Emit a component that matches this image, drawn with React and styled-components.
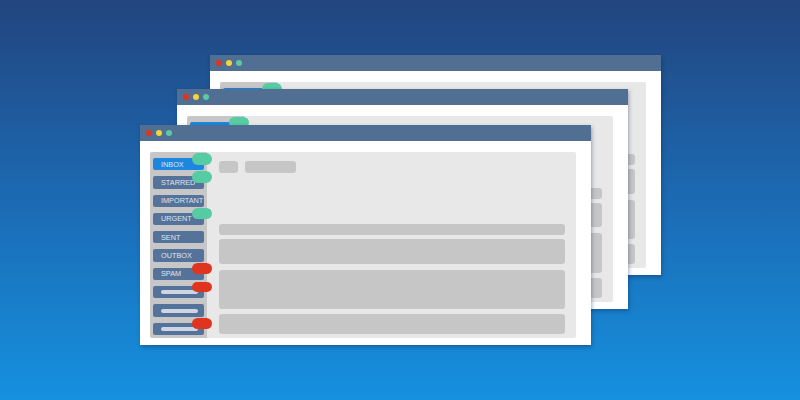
import React from 'react';
import styled, { createGlobalStyle } from 'styled-components';

const GlobalStyle = createGlobalStyle`
  html, body {
    margin: 0;
    padding: 0;
  }
  body {
    font-family: "Liberation Sans", Arial, sans-serif;
  }
`;

const Stage = styled.div`
  position: relative;
  width: 800px;
  height: 400px;
  overflow: hidden;
  background: linear-gradient(180deg, #22457e 0%, #1c6ab3 50%, #1591df 100%);
`;

// windows sit on a free canvas, so their place is part of the picture
const Frame = styled.div`
  position: absolute;
  z-index: 0;
  isolation: isolate;
  left: ${(props) => props.x}px;
  top: ${(props) => props.y}px;
  width: 451px;
  height: 220px;
  display: flex;
  flex-direction: column;
  background: #ffffff;
  box-shadow: 1px 2px 4px rgba(8, 30, 70, 0.35);
`;

const TitleBar = styled.div`
  height: 16px;
  flex-shrink: 0;
  display: flex;
  align-items: center;
  gap: 4px;
  padding-left: 6px;
  background: #516e93;
`;

const Dot = styled.span`
  width: 6px;
  height: 6px;
  border-radius: 50%;
  background: ${(props) => props.color};
`;

const Body = styled.div`
  flex: 1;
  display: flex;
  padding: 11px 15px 7px 10px;
  min-height: 0;
`;

const Panel = styled.div`
  flex: 1;
  display: flex;
  border-radius: 2px;
`;

const Sidebar = styled.div`
  width: 57px;
  flex-shrink: 0;
  display: flex;
  flex-direction: column;
  gap: 6px;
  padding: 6px 0 0 3px;
  box-sizing: border-box;
  background: #c7c7c7;
  border-radius: 2px 0 0 2px;
`;

const Tab = styled.div`
  position: relative;
  width: 51px;
  height: 12.3px;
  display: flex;
  align-items: center;
  padding-left: 8px;
  box-sizing: border-box;
  border-radius: 2px;
  background: ${(props) => (props.active ? '#1b87df' : '#55729a')};
  color: #dfe6ef;
  font-size: 7.3px;
  line-height: 1;
  white-space: nowrap;
`;

const TabLine = styled.span`
  width: 37px;
  height: 4px;
  border-radius: 2px;
  background: #cdd6e2;
`;

const Badge = styled.span`
  position: absolute;
  right: -8px;
  top: ${(props) => (props.tone === 'red' ? -4.5 : -5)}px;
  width: 20px;
  height: ${(props) => (props.tone === 'red' ? 10.5 : 11.5)}px;
  border-radius: 6px;
  background: ${(props) => (props.tone === 'red' ? '#e1341e' : '#56cba4')};
  z-index: 2;
`;

const Content = styled.div`
  flex: 1;
  display: flex;
  flex-direction: column;
  justify-content: space-between;
  padding: 9px 11px 4px 12px;
  background: #e8e8e8;
  border-radius: 0 2px 2px 0;
`;

const TopRow = styled.div`
  display: flex;
  gap: 7px;
`;

const Chip = styled.div`
  width: ${(props) => props.w}px;
  height: 11.7px;
  border-radius: 3px;
  background: #c6c6c6;
`;

const Rows = styled.div`
  display: flex;
  flex-direction: column;
  gap: 5px;
`;

const Block = styled.div`
  height: ${(props) => props.h}px;
  border-radius: 3px;
  background: #c6c6c6;
  margin-top: ${(props) => props.pull || 0}px;
`;

const tabs = [
  { label: 'INBOX', active: true, badge: 'green' },
  { label: 'STARRED', badge: 'green' },
  { label: 'IMPORTANT' },
  { label: 'URGENT', badge: 'green' },
  { label: 'SENT' },
  { label: 'OUTBOX' },
  { label: 'SPAM', badge: 'red' },
  { badge: 'red' },
  {},
  { badge: 'red' },
];

const MailWindow = ({ x, y }) => (
  <Frame x={x} y={y}>
    <TitleBar>
      <Dot color="#e2341d" />
      <Dot color="#f4d437" />
      <Dot color="#56cba4" />
    </TitleBar>
    <Body>
      <Panel>
        <Sidebar>
          {tabs.map((tab, index) => (
            <Tab key={index} active={tab.active}>
              {tab.label || <TabLine />}
              {tab.badge && <Badge tone={tab.badge} />}
            </Tab>
          ))}
        </Sidebar>
        <Content>
          <TopRow>
            <Chip w={18.5} />
            <Chip w={51} />
          </TopRow>
          <Rows>
            <Block h={11} />
            <Block h={24.5} pull={-1} />
            <Block h={39.5} pull={0.7} />
            <Block h={20} />
          </Rows>
        </Content>
      </Panel>
    </Body>
  </Frame>
);

const App = () => (
  <>
    <GlobalStyle />
    <Stage>
      <MailWindow x={210} y={55} />
      <MailWindow x={177} y={88.5} />
      <MailWindow x={140} y={125} />
    </Stage>
  </>
);

export default App;
